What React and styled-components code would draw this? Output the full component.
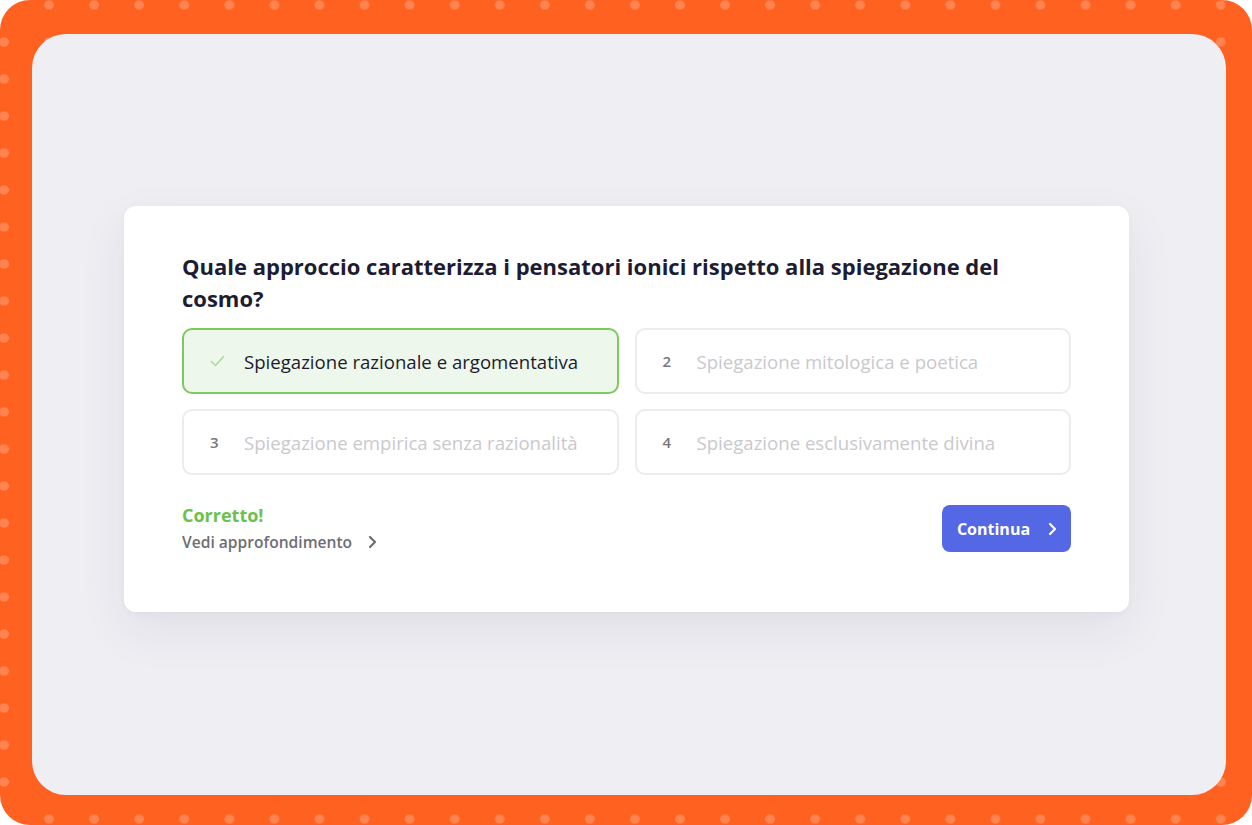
import React from 'react'
import styled, { createGlobalStyle } from 'styled-components'

const Global = createGlobalStyle`
  html, body { margin: 0; padding: 0; background: #ffffff; }
  body { font-family: "Open Sans", Lato, sans-serif; }
`;

const Frame = styled.div`
  width: 1252px;
  height: 825px;
  box-sizing: border-box;
  padding: 34px 26px 30px 32px;
  border-radius: 30px;
  background-color: #ff6121;
  background-image: radial-gradient(circle, rgba(255, 255, 255, 0.22) 4.5px, transparent 5px);
  background-size: 45.07px 37px;
  background-position: -18.5px -13.5px;
  display: flex;
`;

const Panel = styled.div`
  flex: 1;
  background: #efeef3;
  border-radius: 34px;
  display: flex;
  align-items: center;
  justify-content: center;
  padding: 0 5px 11px 0;
`;

const Card = styled.div`
  width: 1005px;
  box-sizing: border-box;
  background: #ffffff;
  border-radius: 12px;
  padding: 44px 58px 60px 58px;
  box-shadow: 0 18px 50px rgba(40, 40, 70, 0.07), 0 2px 8px rgba(40, 40, 70, 0.03);
`;

const Question = styled.h2`
  margin: 0 0 14px 0;
  font-size: 22px;
  line-height: 32px;
  font-weight: 700;
  color: #1c1c33;
`;

const Options = styled.div`
  display: grid;
  grid-template-columns: 1fr 1fr;
  column-gap: 16px;
  row-gap: 15px;
`;

const Option = styled.div`
  height: 66px;
  box-sizing: border-box;
  border: 2px solid ${p => (p.$correct ? '#7cc95d' : '#ececee')};
  background: ${p => (p.$correct ? '#eef7ec' : '#ffffff')};
  border-radius: 10px;
  display: flex;
  align-items: center;
  padding-left: 23px;
`;

const Marker = styled.span`
  width: 34px;
  display: flex;
  align-items: center;
  font-size: 15px;
  font-weight: 600;
  color: #77777d;
  padding-left: 3px;
`;

const OptionText = styled.span`
  font-size: 18.6px;
  font-weight: 500;
  color: ${p => (p.$correct ? '#1c1c2e' : '#c9c9ce')};
`;

const Footer = styled.div`
  margin-top: 29px;
  display: flex;
  justify-content: space-between;
  align-items: flex-end;
`;

const Feedback = styled.div`
  display: flex;
  flex-direction: column;
  gap: 6px;
`;

const Verdict = styled.div`
  font-size: 18px;
  font-weight: 700;
  color: #6cc14c;
  line-height: 22px;
`;

const MoreLink = styled.div`
  display: flex;
  align-items: center;
  gap: 12px;
  font-size: 15.6px;
  font-weight: 600;
  color: #6e6e73;
  line-height: 20px;
`;

const Button = styled.button`
  width: 129px;
  height: 47px;
  border: none;
  border-radius: 8px;
  background: #5468e6;
  color: #ffffff;
  font-family: "Open Sans", Lato, sans-serif;
  font-size: 16px;
  font-weight: 700;
  display: flex;
  align-items: center;
  justify-content: center;
  gap: 14px;
  padding: 0 0 0 4px;
`;

const Chevron = ({ color = '#6e6e73', size = 16, stroke = 2.2 }) => (
  <svg width={size} height={size} viewBox="0 0 16 16" fill="none">
    <path d="M6 3l5 5-5 5" stroke={color} strokeWidth={stroke} strokeLinecap="round" strokeLinejoin="round" />
  </svg>
);

const Check = () => (
  <svg width="15" height="12" viewBox="0 0 15 12" fill="none">
    <path d="M1.5 6.5l4 4 8-9" stroke="#a9dc98" strokeWidth="1.6" strokeLinecap="round" strokeLinejoin="round" />
  </svg>
);

const answers = [
  { n: '1', text: 'Spiegazione razionale e argomentativa', correct: true },
  { n: '2', text: 'Spiegazione mitologica e poetica' },
  { n: '3', text: 'Spiegazione empirica senza razionalità' },
  { n: '4', text: 'Spiegazione esclusivamente divina' },
];

export default function App() {
  return (
    <>
      <Global />
      <Frame>
        <Panel>
          <Card>
            <Question>
              Quale approccio caratterizza i pensatori ionici rispetto alla spiegazione del cosmo?
            </Question>
            <Options>
              {answers.map(a => (
                <Option key={a.n} $correct={a.correct}>
                  <Marker>{a.correct ? <Check /> : a.n}</Marker>
                  <OptionText $correct={a.correct}>{a.text}</OptionText>
                </Option>
              ))}
            </Options>
            <Footer>
              <Feedback>
                <Verdict>Corretto!</Verdict>
                <MoreLink>
                  Vedi approfondimento
                  <Chevron />
                </MoreLink>
              </Feedback>
              <Button>
                Continua
                <Chevron color="#ffffff" size={16} stroke={2.2} />
              </Button>
            </Footer>
          </Card>
        </Panel>
      </Frame>
    </>
  );
}
